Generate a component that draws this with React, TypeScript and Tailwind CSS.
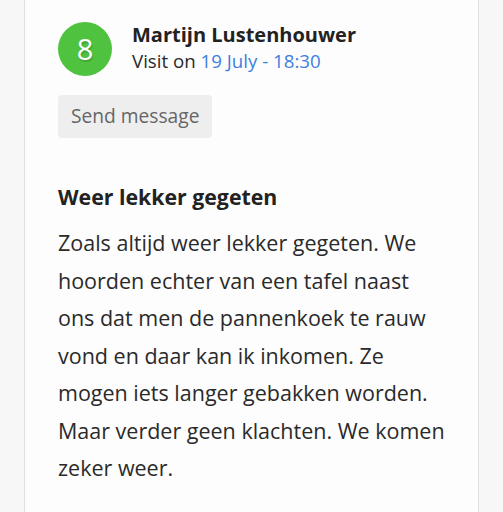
export default function App() {
  return (
    <div className="h-[512px] w-[503px] overflow-hidden bg-[#f7f7f7] px-[24px] font-['Open_Sans',sans-serif]">
      <div className="h-full border-x border-[#e0e0e0] bg-[#fdfdfd] pl-[33px] pr-[30px] pt-[22px]">
        <div className="flex items-start">
          <div className="flex h-[54px] w-[54px] shrink-0 items-center justify-center rounded-full bg-[#4fc23f] text-[29px] text-white [text-shadow:1px_2px_1px_rgba(0,0,0,0.15)]">
            8
          </div>
          <div className="ml-[20px]">
            <p className="text-[20px] font-bold leading-[26px] text-[#222]">Martijn Lustenhouwer</p>
            <p className="text-[18.7px] leading-[26px] text-[#2a2a2a]">
              Visit on <span className="text-[#3f7fe0]">19 July - 18:30</span>
            </p>
          </div>
        </div>
        <button className="mt-[19px] flex h-[43px] items-center rounded-[4px] bg-[#eeeeee] px-[13px] text-[19.2px] text-[#666]">
          Send message
        </button>
        <h2 className="mt-[45px] text-[21.3px] font-bold leading-[28px] text-[#222]">Weer lekker gegeten</h2>
        <p className="mt-[13px] text-[21.5px] leading-[37.5px] text-[#2a2a2a]">
          Zoals altijd weer lekker gegeten. We hoorden echter van een tafel naast ons dat men de pannenkoek te rauw vond en daar kan ik inkomen. Ze mogen iets langer gebakken worden. Maar verder geen klachten. We komen zeker weer.
        </p>
      </div>
    </div>
  );
}
